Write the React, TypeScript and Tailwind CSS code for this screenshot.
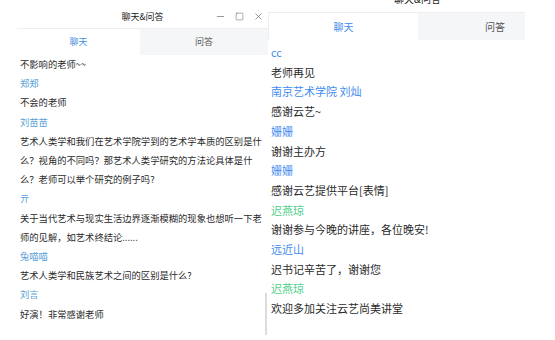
import React from "react";
import { Minus, Square, X } from "lucide-react";

type Row = { name?: string; text?: string; color?: string };

const leftRows: Row[] = [
  { text: "不影响的老师~~" },
  { name: "郑郑" },
  { text: "不会的老师" },
  { name: "刘苗苗" },
  { text: "艺术人类学和我们在艺术学院学到的艺术学本质的区别是什" },
  { text: "么？视角的不同吗？那艺术人类学研究的方法论具体是什" },
  { text: "么？老师可以举个研究的例子吗?" },
  { name: "亓" },
  { text: "关于当代艺术与现实生活边界逐渐模糊的现象也想听一下老" },
  { text: "师的见解，如艺术终结论......" },
  { name: "兔喵喵" },
  { text: "艺术人类学和民族艺术之间的区别是什么?" },
  { name: "刘言" },
  { text: "好演！非常感谢老师" },
];

const rightRows: Row[] = [
  { name: "cc", color: "text-[#3f8cf0]" },
  { text: "老师再见" },
  { name: "南京艺术学院 刘灿", color: "text-[#3f8cf0]" },
  { text: "感谢云艺~" },
  { name: "姗姗", color: "text-[#3f8cf0]" },
  { text: "谢谢主办方" },
  { name: "姗姗", color: "text-[#3f8cf0]" },
  { text: "感谢云艺提供平台[表情]" },
  { name: "迟燕琼", color: "text-[#52d08c]" },
  { text: "谢谢参与今晚的讲座，各位晚安!" },
  { name: "远近山", color: "text-[#3f8cf0]" },
  { text: "迟书记辛苦了，谢谢您" },
  { name: "迟燕琼", color: "text-[#52d08c]" },
  { text: "欢迎多加关注云艺尚美讲堂" },
];

const font = { fontFamily: '"Noto Sans CJK SC", "Noto Sans", sans-serif' };

const LeftWindow = () => {
  return (
    <div className="ml-[17px] w-[251px] h-[340px] flex flex-col shrink-0">
      <div className="h-[28px] pt-[6px] flex items-center relative">
        <div className="w-full text-center text-[9px] text-[#222]">聊天&amp;问答</div>
        <div className="absolute right-[4px] top-[11px] flex items-center gap-[9px] text-[#555]">
          <Minus size={11} strokeWidth={1.3} />
          <Square size={9} strokeWidth={1.3} />
          <X size={11} strokeWidth={1.3} />
        </div>
      </div>
      <div className="h-[27px] flex border-t border-[#eceef2] text-[9px]">
        <div className="w-[123px] flex items-center justify-center text-[#4a8fe0] bg-white">聊天</div>
        <div className="flex-1 flex items-center justify-center text-[#555] bg-[#f5f6f8]">问答</div>
      </div>
      <div className="relative flex-1 px-[3px] text-[9.3px] leading-[19.2px]">
        {leftRows.map((r, i) =>
          r.name ? (
            <div key={i} className="text-[#5a9fd6]">{r.name}</div>
          ) : (
            <div key={i} className="text-[#2a2a2a] whitespace-nowrap">{r.text}</div>
          )
        )}
        <div className="absolute right-[1px] top-[238px] w-[2px] h-[42px] bg-[#dcdcdc]" />
      </div>
    </div>
  );
};

const RightWindow = () => {
  return (
    <div className="w-[257px] h-[355px] -mt-[15px] flex flex-col shrink-0">
      <div className="h-[27px] flex items-center justify-center pl-[42px] text-[10px] text-[#222]">
        聊天&amp;问答
      </div>
      <div className="h-[28px] flex border-t border-l border-[#eceef2] text-[10px]">
        <div className="w-[149px] flex items-center justify-center text-[#3f8cf0] bg-white">聊天</div>
        <div className="w-[107px] flex items-center pl-[67px] text-[#555] bg-[#f5f6f8]">问答</div>
      </div>
      <div className="pt-[3px] px-[3px] text-[11px] leading-[19.7px]">
        {rightRows.map((r, i) =>
          r.name ? (
            <div key={i} className={r.color}>{r.name}</div>
          ) : (
            <div key={i} className="text-[#2a2a2a] whitespace-nowrap">{r.text}</div>
          )
        )}
      </div>
    </div>
  );
};

export default function App() {
  return (
    <div className="w-[555px] h-[340px] overflow-hidden bg-white flex items-start" style={font}>
      <LeftWindow />
      <RightWindow />
    </div>
  );
}
